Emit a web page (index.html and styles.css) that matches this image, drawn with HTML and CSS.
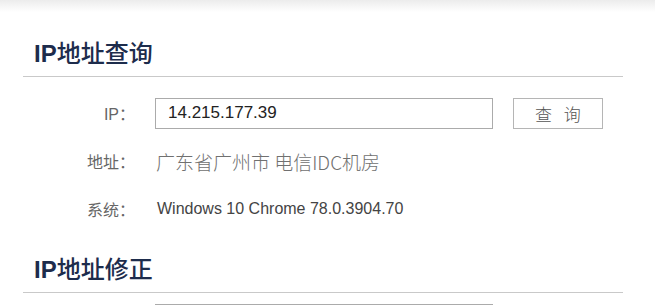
FILE: index.html
```html
<!DOCTYPE html>
<html lang="zh-CN">
<head>
<meta charset="utf-8">
<title>IP地址查询</title>
<link rel="stylesheet" href="styles.css">
</head>
<body>
<div class="topbar"></div>
<main class="page">
  <section class="block">
    <h2 class="title"><span class="latin">IP</span>地址查询</h2>
    <div class="rows">
      <div class="row">
        <span class="label">IP：</span>
        <div class="field">
          <input class="input" type="text" value="14.215.177.39">
          <button class="btn" type="button">查 询</button>
        </div>
      </div>
      <div class="row">
        <span class="label">地址：</span>
        <span class="value wide">广东省广州市 电信IDC机房</span>
      </div>
      <div class="row">
        <span class="label">系统：</span>
        <span class="value dark">Windows 10 Chrome 78.0.3904.70</span>
      </div>
    </div>
  </section>
  <section class="block second">
    <h2 class="title"><span class="latin">IP</span>地址修正</h2>
    <div class="rows tight">
      <div class="row">
        <span class="label"></span>
        <div class="field">
          <input class="input" type="text" value="">
        </div>
      </div>
    </div>
  </section>
</main>
</body>
</html>
```
FILE: styles.css
```css
html, body {
  margin: 0;
  padding: 0;
  background: #fff;
  overflow: hidden;
}
body {
  font-family: "Liberation Sans", Arial, "Noto Sans CJK SC", sans-serif;
  color: #666;
  font-size: 16px;
}
.topbar {
  height: 12px;
  background: linear-gradient(#ececec, #ffffff);
}
.page {
  width: 600px;
  margin-left: 23px;
  padding-top: 20px;
}
.title {
  margin: 0;
  padding-left: 11px;
  height: 44px;
  line-height: 44px;
  font-size: 24px;
  font-weight: 500;
  color: #1d2c4c;
  border-bottom: 1px solid #c9c9c9;
  font-family: "Liberation Sans", "Noto Sans CJK SC", sans-serif;
}
.title .latin {
  font-weight: bold;
}
.rows {
  display: flex;
  flex-direction: column;
  gap: 16px;
  padding-top: 20px;
}
.rows.tight {
  padding-top: 10px;
}
.row {
  display: grid;
  grid-template-columns: 112px 1fr;
  column-gap: 20px;
  align-items: center;
  height: 32px;
}
.label {
  text-align: right;
  color: #666;
}
.value {
  color: #666;
  padding-left: 2px;
}
.value.wide {
  font-family: "Noto Sans CJK SC", sans-serif;
  font-size: 19px;
  font-weight: 300;
  color: #707070;
  padding-left: 1px;
}
.value.dark {
  color: #444;
}
.field {
  display: flex;
  align-items: center;
  gap: 20px;
}
.input {
  box-sizing: border-box;
  width: 338px;
  height: 31px;
  margin: 0;
  border: 1px solid #ababab;
  padding: 0 12px;
  font-family: "Liberation Sans", Arial, sans-serif;
  font-size: 17px;
  color: #222;
  background: #fff;
  outline: none;
}
.btn {
  box-sizing: border-box;
  width: 90px;
  height: 31px;
  margin: 0;
  border: 1px solid #b5b5b5;
  background: #fff;
  color: #555;
  font-family: "Noto Sans CJK SC", sans-serif;
  font-size: 17px;
  font-weight: 300;
  letter-spacing: 4px;
  padding: 0 0 0 4px;
}
.second {
  margin-top: 23px;
}
```
